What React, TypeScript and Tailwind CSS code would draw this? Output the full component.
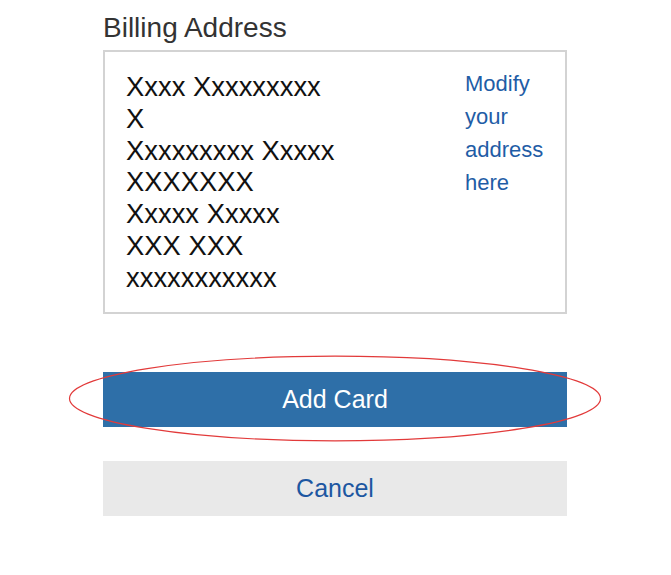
import React from 'react'

const ADDRESS_LINES = [
  'Xxxx Xxxxxxxxx',
  'X',
  'Xxxxxxxxx Xxxxx',
  'XXXXXXX',
  'Xxxxx Xxxxx',
  'XXX XXX',
  'xxxxxxxxxxx',
]

function BillingAddress() {
  return (
    <section>
      <h2 className="text-[28px] leading-[34px] text-[#333333] mb-[5px]">Billing Address</h2>
      <div className="h-[264px] border-2 border-[#d3d3d3] bg-white flex items-start pt-[15px] pl-[21px] pr-[16px]">
        <div className="flex-1 mt-[4px] text-[27.4px] leading-[31.8px] text-[#111111]">
          {ADDRESS_LINES.map((line, i) => (
            <div key={i}>{line}</div>
          ))}
        </div>
        <a href="#" className="w-[84px] shrink-0 text-[22px] leading-[33px] text-[#1f5da6]">
          Modify your address here
        </a>
      </div>
    </section>
  )
}

export default function App() {
  return (
    <div className="min-h-[575px] bg-white font-['Liberation_Sans',Arial,sans-serif]">
      <div className="w-[464px] ml-[103px] pt-[11px]">
        <BillingAddress />

        <div className="relative mt-[58px]">
          <button className="w-full h-[55px] bg-[#2e6fa8] text-white text-[25px]">Add Card</button>
          {/* annotation ring drawn over the primary button */}
          <svg
            className="absolute left-[-34px] top-[-16px] pointer-events-none overflow-visible"
            width="532"
            height="85"
            viewBox="0 0 532 85"
          >
            <ellipse cx="266" cy="42.5" rx="265.5" ry="42.3" fill="none" stroke="#e23a3a" strokeWidth="1.2" />
          </svg>
        </div>

        <button className="mt-[34px] w-full h-[55px] bg-[#e9e9e9] text-[#1d57a1] text-[25px]">Cancel</button>
      </div>
    </div>
  )
}
